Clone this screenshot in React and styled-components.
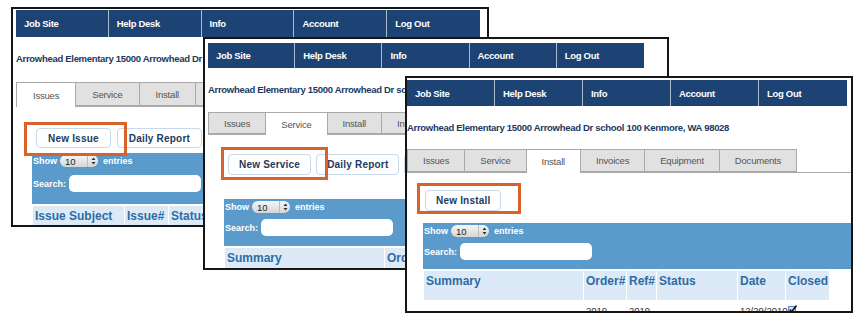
import styled, { createGlobalStyle } from "styled-components";

const GlobalStyle = createGlobalStyle`
  html, body {
    margin: 0;
    padding: 0;
    background: #fff;
  }
  body {
    font-family: "Liberation Sans", Arial, sans-serif;
  }
`;

const Desktop = styled.div`
  position: relative;
  width: 862px;
  height: 323px;
  overflow: hidden;
  background: #fff;
`;

// each screenshot sits on the canvas like a window on a desktop
const Window = styled.div`
  position: absolute;
  left: ${p => p.$x}px;
  top: ${p => p.$y}px;
  width: ${p => p.$w}px;
  height: ${p => p.$h}px;
  z-index: ${p => p.$z};
  box-sizing: border-box;
  border: 2px solid #161616;
  background: #fff;
  overflow: hidden;
  padding-left: ${p => p.$padL}px;
  display: flex;
  flex-direction: column;
`;

const NavBar = styled.div`
  display: flex;
  flex: none;
  margin-top: ${p => p.$mt}px;
  height: ${p => p.$h}px;
`;

const NavItem = styled.div`
  width: ${p => p.$w}px;
  flex: none;
  box-sizing: border-box;
  background: #1c4373;
  border-right: 1px solid #aebcd0;
  padding-left: 8px;
  display: flex;
  align-items: center;
  color: #fff;
  font-size: 9.5px;
  font-weight: bold;
  letter-spacing: -0.3px;
  &:last-child {
    border-right: none;
  }
`;

const Address = styled.div`
  flex: none;
  height: 42px;
  display: flex;
  align-items: center;
  white-space: nowrap;
  color: #1b3960;
  font-size: 9.5px;
  font-weight: bold;
  letter-spacing: -0.3px;
`;

const TabBar = styled.div`
  display: flex;
  flex: none;
  margin-top: ${p => p.$mt}px;
  height: ${p => p.$h}px;
  border-bottom: 1px solid #a9a9a9;
`;

const Tab = styled.div`
  flex: none;
  box-sizing: border-box;
  height: ${p => (p.$active ? "calc(100% + 1px)" : "100%")};
  padding: 0 ${p => p.$pad}px;
  margin-right: -1px;
  display: flex;
  align-items: center;
  background: ${p => (p.$active ? "#fff" : "#e1e1e1")};
  border: 1px solid #a9a9a9;
  border-bottom: ${p => (p.$active ? "none" : "1px solid #a9a9a9")};
  color: #555;
  font-size: 9.5px;
  letter-spacing: -0.2px;
  white-space: nowrap;
`;

const ButtonRow = styled.div`
  display: flex;
  flex: none;
  gap: ${p => p.$gap}px;
  margin-top: ${p => p.$mt}px;
  margin-left: ${p => p.$ml}px;
  height: ${p => p.$h}px;
`;

const Highlight = styled.div`
  position: relative;
  display: flex;
  &::after {
    content: "";
    position: absolute;
    top: -${p => p.$box[0]}px;
    right: -${p => p.$box[1]}px;
    bottom: -${p => p.$box[2]}px;
    left: -${p => p.$box[3]}px;
    border: 3px solid #d9622b;
    pointer-events: none;
  }
`;

const Button = styled.div`
  flex: none;
  box-sizing: border-box;
  padding: 0 ${p => p.$pad}px;
  display: flex;
  align-items: center;
  background: #fff;
  border: 1px solid #c8daeb;
  border-radius: 4px;
  color: #1e3a5e;
  font-size: 10px;
  font-weight: bold;
  letter-spacing: 0.2px;
  white-space: nowrap;
`;

const Panel = styled.div`
  flex: none;
  box-sizing: border-box;
  width: 620px;
  height: ${p => p.$h}px;
  margin-top: ${p => p.$mt}px;
  margin-left: 16px;
  padding: 1px 1px 0;
  background: #5b9bcb;
  color: #fff;
  font-size: 9px;
  font-weight: bold;
`;

const ShowRow = styled.div`
  display: flex;
  align-items: center;
  gap: 3px;
  height: 14px;
`;

const Entries = styled.span`
  margin-left: 2px;
`;

const Select = styled.div`
  box-sizing: border-box;
  width: 38px;
  height: 12px;
  display: flex;
  align-items: center;
  border-radius: 6px;
  background: linear-gradient(#f6f6f6, #d6d6d6);
  color: #222;
  font-weight: normal;
  font-size: 9.5px;
`;

const SelectValue = styled.span`
  flex: 1;
  padding-left: 5px;
`;

const SelectArrows = styled.span`
  display: flex;
  align-items: center;
  justify-content: center;
  width: 10px;
  height: 100%;
  border-left: 1px solid #bdbdbd;
`;

const SearchRow = styled.div`
  display: flex;
  align-items: center;
  gap: 3px;
  height: 19px;
  margin-top: ${p => p.$mt}px;
`;

const SearchInput = styled.div`
  width: 132px;
  height: 17px;
  border-radius: 5px;
  background: #fff;
`;

const TableRow = styled.div`
  display: flex;
  flex: none;
  gap: 1px;
  margin-left: 17px;
  margin-top: ${p => p.$mt || 0}px;
`;

const HeadCell = styled.div`
  flex: none;
  box-sizing: border-box;
  width: ${p => p.$w}px;
  height: ${p => p.$h}px;
  padding: 3px 2px 0;
  background: #dceaf8;
  color: #2e6ca4;
  font-size: 12px;
  font-weight: bold;
  white-space: nowrap;
  overflow: hidden;
`;

const DataCell = styled.div`
  flex: none;
  box-sizing: border-box;
  width: ${p => p.$w}px;
  padding: 5px 2px 0;
  color: #333;
  font-size: 9.5px;
  white-space: nowrap;
`;

const Arrows = () => (
  <svg width="5" height="8" viewBox="0 0 5 8">
    <path d="M2.5 0.5 L4.5 3 L0.5 3 Z M2.5 7.5 L4.5 5 L0.5 5 Z" fill="#333" />
  </svg>
);

const Check = () => (
  <svg width="9" height="9" viewBox="0 0 9 9">
    <rect x="0.5" y="1.5" width="7" height="7" fill="#cfe0f3" stroke="#5f86b5" />
    <path d="M1.8 4.6 L3.6 6.8 L8.4 0.6" fill="none" stroke="#111" strokeWidth="1.6" />
  </svg>
);

const NAV = ["Job Site", "Help Desk", "Info", "Account", "Log Out"];
const TABS = ["Issues", "Service", "Install", "Invoices", "Equipment", "Documents"];
const ADDRESS = "Arrowhead Elementary 15000 Arrowhead Dr school 100 Kenmore, WA 98028";
const ORDER_COLS = [
  ["Summary", 159],
  ["Order#", 42],
  ["Ref#", 29],
  ["Status", 80],
  ["Date", 47],
  ["Closed", 43],
];

const windows = [
  {
    id: "issues",
    x: 11, y: 7, w: 478, h: 220, z: 1, padL: 3,
    nav: { mt: 1, h: 27, cell: 92.8 },
    tabs: { mt: 3, h: 24, active: "Issues", pad: 16 },
    buttons: { mt: 21, ml: 20, h: 20, gap: 6, pad: 11, labels: ["New Issue", "Daily Report"], box: [6, 16, 8, 12] },
    panel: { mt: 5, h: 51, searchGap: 6 },
    cols: [["Issue Subject", 91], ["Issue#", 43], ["Status", 80], ["Date", 47], ["Closed", 43]],
    headH: 24,
    rows: [],
  },
  {
    id: "service",
    x: 203, y: 37, w: 466, h: 233, z: 2, padL: 3,
    nav: { mt: 4, h: 25, cell: 87.2 },
    tabs: { mt: 2, h: 22, active: "Service", pad: 15 },
    buttons: { mt: 19, ml: 20, h: 21, gap: 5, pad: 10, labels: ["New Service", "Daily Report", "Schedule"], box: [7, 17, 5, 7] },
    panel: { mt: 24, h: 47, searchGap: 4 },
    cols: ORDER_COLS,
    headH: 24,
    rows: [],
  },
  {
    id: "install",
    x: 405, y: 76, w: 448, h: 237, z: 3, padL: 0,
    nav: { mt: 2, h: 26, cell: 88 },
    tabs: { mt: 1, h: 23, active: "Install", pad: 15 },
    buttons: { mt: 17, ml: 18, h: 21, gap: 5, pad: 10, labels: ["New Install"], box: [7, 20, 3, 8] },
    panel: { mt: 12, h: 46, searchGap: 4 },
    cols: ORDER_COLS,
    headH: 29,
    rows: [["", "2019", "2019", "", "12/29/2010", "check"]],
  },
];

function Screen({ cfg }) {
  const [first, ...rest] = cfg.buttons.labels;
  const pad = cfg.buttons.pad;
  return (
    <Window $x={cfg.x} $y={cfg.y} $w={cfg.w} $h={cfg.h} $z={cfg.z} $padL={cfg.padL}>
      <NavBar $mt={cfg.nav.mt} $h={cfg.nav.h}>
        {NAV.map(n => (
          <NavItem key={n} $w={cfg.nav.cell}>{n}</NavItem>
        ))}
      </NavBar>

      <Address>{ADDRESS}</Address>

      <TabBar $mt={cfg.tabs.mt} $h={cfg.tabs.h}>
        {TABS.map(t => (
          <Tab key={t} $pad={cfg.tabs.pad} $active={t === cfg.tabs.active}>{t}</Tab>
        ))}
      </TabBar>

      <ButtonRow $mt={cfg.buttons.mt} $ml={cfg.buttons.ml} $h={cfg.buttons.h} $gap={cfg.buttons.gap}>
        <Highlight $box={cfg.buttons.box}>
          <Button $pad={pad}>{first}</Button>
        </Highlight>
        {rest.map(b => (
          <Button key={b} $pad={pad}>{b}</Button>
        ))}
      </ButtonRow>

      <Panel $mt={cfg.panel.mt} $h={cfg.panel.h}>
        <ShowRow>
          Show
          <Select>
            <SelectValue>10</SelectValue>
            <SelectArrows><Arrows /></SelectArrows>
          </Select>
          <Entries>entries</Entries>
        </ShowRow>
        <SearchRow $mt={cfg.panel.searchGap}>
          Search:
          <SearchInput />
        </SearchRow>
      </Panel>

      <TableRow $mt={2}>
        {cfg.cols.map(([label, w]) => (
          <HeadCell key={label} $w={w} $h={cfg.headH}>{label}</HeadCell>
        ))}
      </TableRow>

      {cfg.rows.map((row, i) => (
        <TableRow key={i}>
          {row.map((v, j) => (
            <DataCell key={j} $w={cfg.cols[j][1]}>{v === "check" ? <Check /> : v}</DataCell>
          ))}
        </TableRow>
      ))}
    </Window>
  );
}

export default function App() {
  return (
    <>
      <GlobalStyle />
      <Desktop>
        {windows.map(w => (
          <Screen key={w.id} cfg={w} />
        ))}
      </Desktop>
    </>
  );
}
